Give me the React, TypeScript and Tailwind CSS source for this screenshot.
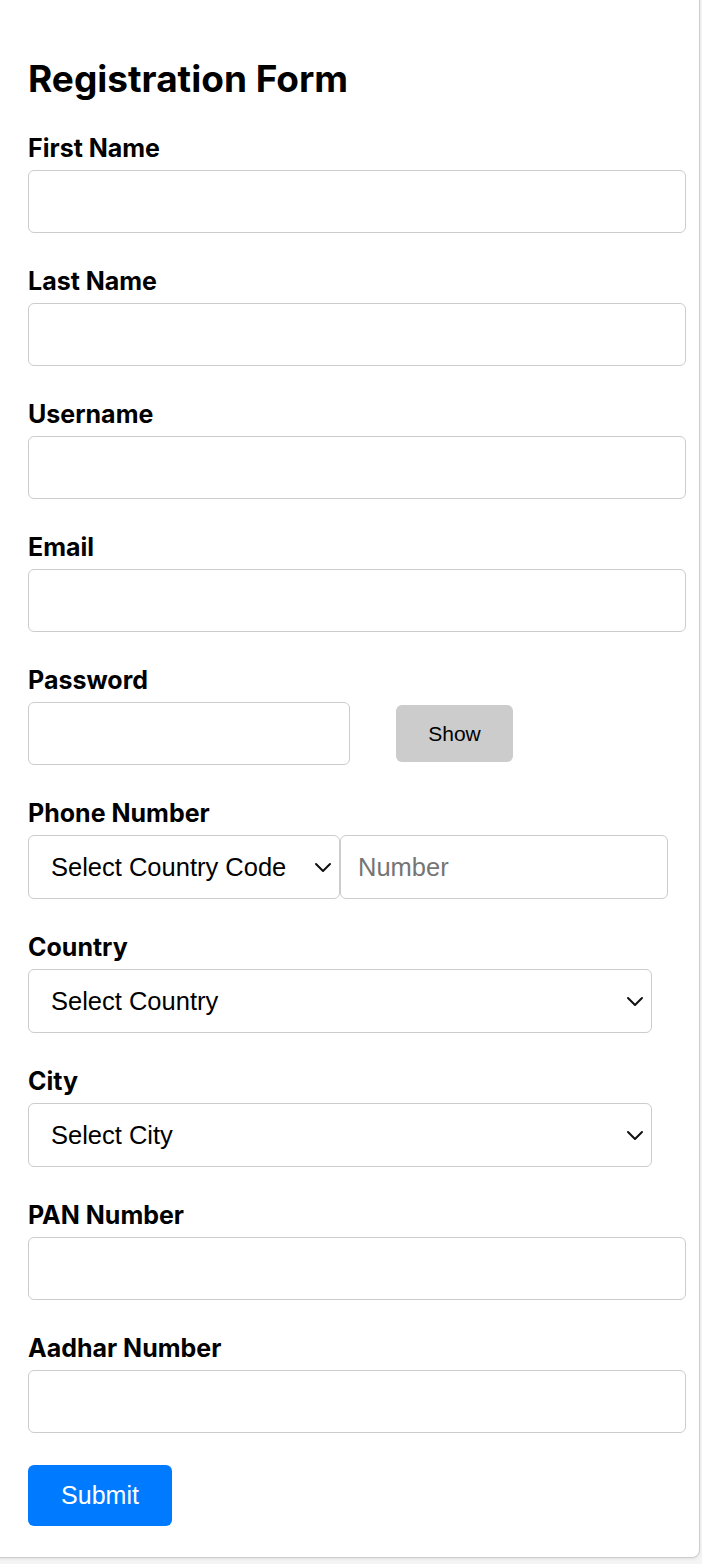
import { useState } from "react";

const labelClass =
  "block text-[25px] font-bold leading-[23px] text-black mb-[10px] font-['Inter',sans-serif]";
const inputClass =
  "h-[63px] rounded-[6px] border border-[#cccccc] bg-white px-[17px] text-[25.5px] text-black outline-none placeholder:text-[#757575] font-['Liberation_Sans',Arial,sans-serif]";
const selectClass =
  "h-[64px] w-full appearance-none rounded-[6px] border border-[#cccccc] bg-white pl-[22px] text-[25.5px] text-black outline-none font-['Liberation_Sans',Arial,sans-serif]";

function Chevron() {
  return (
    <svg
      className="pointer-events-none absolute top-1/2 right-[8px] -translate-y-1/2"
      width="18"
      height="12"
      viewBox="0 0 18 12"
      fill="none"
    >
      <path
        d="M2 3l7 7 7-7"
        stroke="#111"
        strokeWidth="2"
        strokeLinecap="round"
        strokeLinejoin="round"
      />
    </svg>
  );
}

function Field({ label, type = "text" }: { label: string; type?: string }) {
  return (
    <div className="mb-[37px]">
      <label className={labelClass}>{label}</label>
      <input type={type} className={`${inputClass} w-[658px]`} />
    </div>
  );
}

function SelectField({ label, placeholder }: { label: string; placeholder: string }) {
  return (
    <div className="mb-[37px]">
      <label className={labelClass}>{label}</label>
      <div className="relative w-[624px]">
        <select defaultValue="" className={selectClass}>
          <option value="">{placeholder}</option>
        </select>
        <Chevron />
      </div>
    </div>
  );
}

export default function App() {
  const [show, setShow] = useState(false);

  return (
    <div className="min-h-[1564px] overflow-hidden bg-[#f4f4f4]">
      <div className="-mt-[8px] -ml-[12px] w-[712px] rounded-[8px] border border-[#cccccc] bg-white pt-[66px] pb-[31px] pl-[39px] shadow-[0_1px_3px_rgba(0,0,0,0.08)]">
        <h1 className="mb-[38px] text-[37px] font-bold leading-[40px] text-black font-['Inter',sans-serif]">
          Registration Form
        </h1>

        <form onSubmit={(e) => e.preventDefault()}>
          <Field label="First Name" />
          <Field label="Last Name" />
          <Field label="Username" />
          <Field label="Email" type="email" />

          <div className="mb-[37px]">
            <label className={labelClass}>Password</label>
            <div className="flex items-center gap-[46px]">
              <input
                type={show ? "text" : "password"}
                className={`${inputClass} w-[322px]`}
              />
              <button
                type="button"
                onClick={() => setShow(!show)}
                className="h-[57px] w-[117px] rounded-[6px] bg-[#cccccc] text-[21px] text-black font-['Liberation_Sans',Arial,sans-serif]"
              >
                {show ? "Hide" : "Show"}
              </button>
            </div>
          </div>

          <div className="mb-[37px]">
            <label className={labelClass}>Phone Number</label>
            <div className="flex">
              <div className="relative w-[312px]">
                <select defaultValue="" className={selectClass}>
                  <option value="">Select Country Code</option>
                </select>
                <Chevron />
              </div>
              <input
                type="tel"
                placeholder="Number"
                className={`${inputClass} h-[64px] w-[328px]`}
              />
            </div>
          </div>

          <SelectField label="Country" placeholder="Select Country" />
          <SelectField label="City" placeholder="Select City" />
          <Field label="PAN Number" />
          <div className="mb-[32px]">
            <label className={labelClass}>Aadhar Number</label>
            <input type="text" className={`${inputClass} w-[658px]`} />
          </div>

          <button
            type="submit"
            className="h-[61px] w-[144px] rounded-[6px] bg-[#007bff] text-[25px] text-white font-['Liberation_Sans',Arial,sans-serif]"
          >
            Submit
          </button>
        </form>
      </div>
    </div>
  );
}
